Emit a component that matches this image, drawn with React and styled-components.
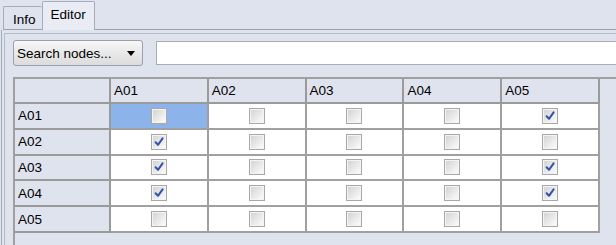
import React from "react";
import styled, { createGlobalStyle } from "styled-components";

const GlobalStyle = createGlobalStyle`
 html, body {
  margin: 0;
  padding: 0;
  background: #dfe3ee;
 }
`;

const nodes = ["A01", "A02", "A03", "A04", "A05"];

const links = {
 A01: ["A05"],
 A02: ["A01"],
 A03: ["A01", "A05"],
 A04: ["A01", "A05"],
 A05: [],
};

const CheckBox = ({ checked }) => (
 <svg width="16" height="16" viewBox="0 0 16 16">
  <defs>
   <linearGradient id="cbfill" x1="0" y1="0" x2="1" y2="1">
    <stop offset="0" stopColor="#d4d4d4" />
    <stop offset="1" stopColor="#fbfbfb" />
   </linearGradient>
  </defs>
  <rect x="0.5" y="0.5" width="15" height="15" fill="#f4f4f4" stroke="#a8a8a8" />
  <rect x="2" y="2" width="12" height="12" fill="url(#cbfill)" />
  {checked && (
   <path
    d="M4.6 8.2 L7 10.8 L11.6 4.4"
    fill="none"
    stroke="#3353a8"
    strokeWidth="2"
    strokeLinecap="round"
    strokeLinejoin="round"
   />
  )}
 </svg>
);

const App = () => {
 return (
  <Window>
   <GlobalStyle />
   <TabBar>
    <Tab>Info</Tab>
    <Tab active>Editor</Tab>
    <TabFiller />
   </TabBar>
   <Frame>
    <Panel>
     <Toolbar>
      <SearchButton>
       <span>Search nodes...</span>
       <Arrow />
      </SearchButton>
      <TextField />
     </Toolbar>
     <ScrollPane>
      <Grid>
       <HeaderCell />
       {nodes.map((n) => (
        <HeaderCell key={n}>{n}</HeaderCell>
       ))}
       {nodes.map((row, r) => (
        <React.Fragment key={row}>
         <HeaderCell>{row}</HeaderCell>
         {nodes.map((col, c) => (
          <Cell key={col} selected={r === 0 && c === 0}>
           <CheckBox checked={links[row].includes(col)} />
          </Cell>
         ))}
        </React.Fragment>
       ))}
      </Grid>
     </ScrollPane>
    </Panel>
   </Frame>
  </Window>
 );
};

const Window = styled.div`
 width: 616px;
 height: 245px;
 overflow: hidden;
 display: flex;
 flex-direction: column;
 background: #dfe3ee;
 font-family: "Liberation Sans", Arial, sans-serif;
 font-size: 13.5px;
 color: #000;
`;

const TabBar = styled.div`
 display: flex;
 align-items: flex-end;
 height: 30px;
 padding-left: 3px;
 box-sizing: border-box;
`;

const Tab = styled.div`
 height: ${(p) => (p.active ? "29px" : "24px")};
 padding: ${(p) => (p.active ? "4px 8px 0 8px" : "4px 6px 0 9px")};
 box-sizing: border-box;
 background: ${(p) => (p.active ? "#e9ecf4" : "#dfe3ee")};
 border: 1px solid #a7acba;
 border-bottom: ${(p) => (p.active ? "none" : "1px solid #9ca2b2")};
 border-right: ${(p) => (p.active ? "1px solid #a7acba" : "none")};
 border-radius: 2px 2px 0 0;
 line-height: 17px;
`;

const TabFiller = styled.div`
 flex: 1;
 border-bottom: 1px solid #9ca2b2;
`;

const Frame = styled.div`
 flex: 1;
 display: flex;
 margin-left: 1px;
 padding: 3px 0 0 2px;
 border-left: 1px solid #a7acba;
`;

const Panel = styled.div`
 flex: 1;
 display: flex;
 flex-direction: column;
 padding: 6px 0 0 8px;
 border-top: 1px solid #b6bbc8;
 border-left: 1px solid #b6bbc8;
`;

const Toolbar = styled.div`
 display: flex;
 align-items: center;
 gap: 13px;
 height: 26px;
 margin-right: -20px;
`;

const SearchButton = styled.div`
 width: 130px;
 height: 26px;
 box-sizing: border-box;
 display: flex;
 align-items: center;
 justify-content: space-between;
 padding: 0 7px 0 3px;
 border: 1px solid #9aa0ac;
 border-radius: 3px;
 background: linear-gradient(#f7f7f7, #e6e6e6 60%, #dcdcdc);
`;

const Arrow = styled.span`
 width: 0;
 height: 0;
 border-left: 4px solid transparent;
 border-right: 4px solid transparent;
 border-top: 5px solid #000;
`;

const TextField = styled.div`
 flex: 1;
 height: 24px;
 box-sizing: border-box;
 background: #fff;
 border: 1px solid #a6acb8;
`;

const ScrollPane = styled.div`
 flex: 1;
 margin-top: 11px;
 margin-right: -20px;
 border-top: 2px solid #a0a0a0;
 border-left: 2px solid #a0a0a0;
 background: #dfe3ee;
`;

const Grid = styled.div`
 width: 585px;
 display: grid;
 grid-template-columns: 96px repeat(5, 1fr);
 grid-template-rows: 25px;
 grid-auto-rows: 25.8px;
`;

const HeaderCell = styled.div`
 display: flex;
 align-items: center;
 padding-left: 3px;
 box-sizing: border-box;
 background: #dfe3ee;
 border-right: 2px solid #9a9a9a;
 border-bottom: 2px solid #9a9a9a;
`;

const Cell = styled.div`
 display: flex;
 align-items: center;
 justify-content: center;
 box-sizing: border-box;
 background: ${(p) => (p.selected ? "#8db3eb" : "#fff")};
 border-right: 2px solid #a0a0a0;
 border-bottom: 2px solid #a0a0a0;
`;

export default App;
